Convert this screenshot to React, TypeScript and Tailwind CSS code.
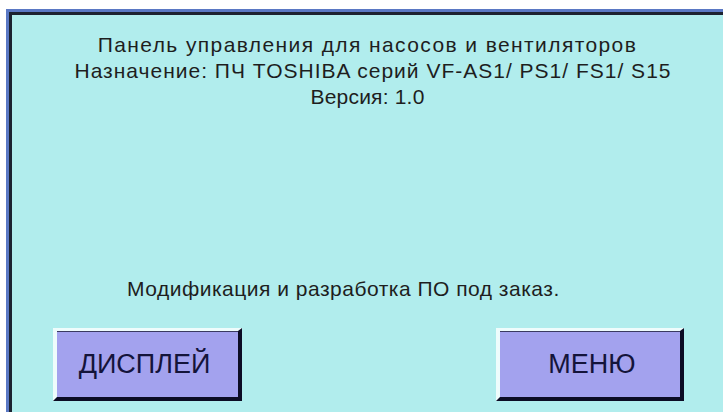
import React from "react";

// Стартовый экран панели оператора
function PanelButton({ label, className }: { label: string; className?: string }) {
    return (
        <button
            className={`h-[73px] bg-[#a3a2ee] border-l-[4px] border-t-[3px] border-r-[4px] border-b-[4px] border-l-[#eefcfc] border-t-[#eefcfc] border-r-[#0c0c24] border-b-[#0c0c24] shadow-[inset_0_1px_0_#3a3a60] text-[#14143a] text-[27px] leading-none font-['Liberation_Sans',Arial,sans-serif] ${className ?? ""}`}
        >
            {label}
        </button>
    );
}

export default function App() {
    return (
        <div className="w-[723px] h-[412px] bg-white pt-[9px] pl-[6px] overflow-hidden">
            <div className="h-full border-t-[3px] border-l-[3px] border-[#5a78c4]">
                <div className="h-full border-t-[3px] border-l-[3px] border-[#1c2230]">
                    <div className="h-full bg-[#b1eded] flex flex-col font-['Liberation_Sans',Arial,sans-serif] text-[#1e1e1e]">
                        <div className="pt-[17px] flex flex-col items-center text-[21px] leading-[26px]">
                            <p className="tracking-[1.4px]">Панель управления для насосов и вентиляторов</p>
                            <p className="pl-[11px] tracking-[1px]">Назначение: ПЧ TOSHIBA серий VF-AS1/ PS1/ FS1/ S15</p>
                            <p className="tracking-[0.2px]">Версия: 1.0</p>
                        </div>
                        <p className="mt-auto pl-[115px] text-[21px] tracking-[0.5px] leading-[26px]">
                            Модификация и разработка ПО под заказ.
                        </p>
                        <div className="flex justify-between pl-[41px] pr-[39px] pt-[26px] pb-[11px]">
                            <PanelButton label="ДИСПЛЕЙ" className="w-[189px] pr-[6px]" />
                            <PanelButton label="МЕНЮ" className="w-[188px] pl-[4px]" />
                        </div>
                    </div>
                </div>
            </div>
        </div>
    );
}
